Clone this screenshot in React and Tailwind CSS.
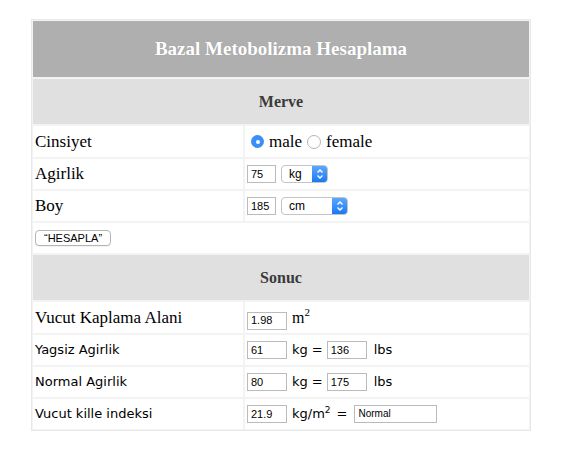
import React from 'react';

const serif = { fontFamily: '"Liberation Serif", "Times New Roman", serif' };
const sans = { fontFamily: '"DejaVu Sans", Verdana, sans-serif' };
const arial = { fontFamily: '"Liberation Sans", Arial, sans-serif' };

function Box({ value, w = 'w-[29px]', size = 'text-[11px]' }) {
  return (
    <div style={arial} className={`${w} h-[18px] border border-[#bbb] bg-white px-[3px] flex items-center ${size} text-black leading-none`}>
      {value}
    </div>
  );
}

function Select({ label, w }) {
  return (
    <div style={arial} className={`${w} h-[18px] flex rounded-[4px] border border-[#c4c4c4] bg-white overflow-hidden text-[12px] text-black`}>
      <div className="flex-1 flex items-center pl-[7px]">{label}</div>
      <div className="w-[15px] bg-gradient-to-b from-[#5aa7ff] to-[#1a78f0] flex items-center justify-center">
        <svg width="8" height="12" viewBox="0 0 8 12" fill="none" stroke="white" strokeWidth="1.4">
          <path d="M1.5 4.5 L4 2 L6.5 4.5" />
          <path d="M1.5 7.5 L4 10 L6.5 7.5" />
        </svg>
      </div>
    </div>
  );
}

function Row({ left, right, h = 'h-[30px]' }) {
  return (
    <>
      <div className={`${h} bg-white flex items-center pl-[2px]`}>{left}</div>
      <div className={`${h} bg-white flex items-center pl-[2px]`}>{right}</div>
    </>
  );
}

export default function App() {
  return (
    <div className="w-[577px] h-[476px] bg-white pt-[19px] pl-[31px]">
      <div className="w-[500px] border border-[#e8e8e8] bg-[#f3f3f3] p-px grid grid-cols-[210px_284px] gap-[2px]">
        <div className="col-span-2 h-[56px] bg-[#afafaf] flex items-center justify-center">
          <span style={{ ...serif, textShadow: '0 0 1px rgba(0,0,0,0.15)' }} className="text-white font-bold text-[19px]">Bazal Metobolizma Hesaplama</span>
        </div>
        <div className="col-span-2 h-[45px] bg-[#e0e0e0] flex items-center justify-center">
          <span style={serif} className="text-[#3a3a3a] font-bold text-[16px]">Merve</span>
        </div>

        <Row
          h="h-[31px]"
          left={<span style={serif} className="text-[17px] text-black">Cinsiyet</span>}
          right={
            <div style={serif} className="flex items-center text-[17px] text-black">
              <span className="ml-[4px] w-[13px] h-[13px] rounded-full bg-[#3b8ef5] flex items-center justify-center">
                <span className="w-[4px] h-[4px] rounded-full bg-white" />
              </span>
              <span className="ml-[5px]">male</span>
              <span className="ml-[5px] w-[14px] h-[14px] rounded-full border border-[#b5b5b5] bg-white" />
              <span className="ml-[5px]">female</span>
            </div>
          }
        />
        <Row
          left={<span style={serif} className="text-[17px] text-black">Agirlik</span>}
          right={
            <div className="flex items-center gap-[5px]">
              <Box value="75" />
              <Select label="kg" w="w-[47px]" />
            </div>
          }
        />
        <Row
          left={<span style={serif} className="text-[17px] text-black">Boy</span>}
          right={
            <div className="flex items-center gap-[5px]">
              <Box value="185" />
              <Select label="cm" w="w-[67px]" />
            </div>
          }
        />
        <div className="col-span-2 h-[30px] bg-white flex items-center pl-[2px]">
          <div style={arial} className="h-[16px] px-[8px] rounded-[4px] border border-[#b5b5b5] bg-white text-[11px] text-black flex items-center shadow-[0_1px_0_rgba(0,0,0,0.05)]">
            “HESAPLA”
          </div>
        </div>

        <div className="col-span-2 h-[45px] bg-[#e0e0e0] flex items-center justify-center">
          <span style={serif} className="text-[#3a3a3a] font-bold text-[16px]">Sonuc</span>
        </div>

        <Row
          h="h-[31px]"
          left={<span style={serif} className="text-[17px] text-black">Vucut Kaplama Alani</span>}
          right={
            <div className="flex items-center">
              <div className="mt-[6px]"><Box value="1.98" w="w-[40px]" /></div>
              <span style={serif} className="ml-[5px] text-[16px] text-black">m<sup className="text-[11px] -top-[7px]">2</sup></span>
            </div>
          }
        />
        <Row
          left={<span style={sans} className="text-[13px] text-black">Yagsiz Agirlik</span>}
          right={
            <div style={sans} className="flex items-center text-[13px] text-black">
              <Box value="61" w="w-[40px]" />
              <span className="ml-[5px]">kg</span>
              <span className="ml-[4px]">=</span>
              <span className="ml-[4px]"><Box value="136" w="w-[40px]" /></span>
              <span className="ml-[7px]">lbs</span>
            </div>
          }
        />
        <Row
          left={<span style={sans} className="text-[13px] text-black">Normal Agirlik</span>}
          right={
            <div style={sans} className="flex items-center text-[13px] text-black">
              <Box value="80" w="w-[40px]" />
              <span className="ml-[5px]">kg</span>
              <span className="ml-[4px]">=</span>
              <span className="ml-[4px]"><Box value="175" w="w-[40px]" /></span>
              <span className="ml-[7px]">lbs</span>
            </div>
          }
        />
        <Row
          left={<span style={sans} className="text-[13px] text-black">Vucut kille indeksi</span>}
          right={
            <div style={sans} className="flex items-center text-[13px] text-black">
              <Box value="21.9" w="w-[40px]" />
              <span className="ml-[5px]">kg/m<sup className="text-[9px] -top-[5px]">2</sup></span>
              <span className="ml-[6px]">=</span>
              <span className="ml-[7px]"><Box value="Normal" w="w-[83px]" size="text-[10px]" /></span>
            </div>
          }
        />
      </div>
    </div>
  );
}
